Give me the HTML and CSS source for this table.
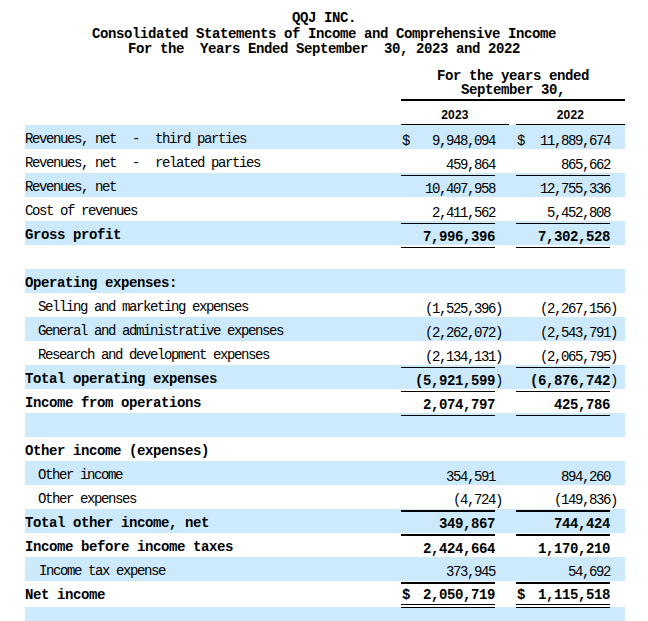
FILE: index.html
```html
<!DOCTYPE html>
<html lang="en">
<head>
<meta charset="utf-8">
<title>QQJ INC. Consolidated Statements of Income</title>
<link rel="stylesheet" href="styles.css">
</head>
<body>
<div class="page">
  <header class="title">
    <div class="tline">QQJ INC.</div>
    <div class="tline">Consolidated Statements of Income and Comprehensive Income</div>
    <div class="tline">For the  Years Ended September  30, 2023 and 2022</div>
  </header>

  <section class="statement">
    <div class="grid head">
      <div class="period">For the years ended<br>September 30,</div>
    </div>
    <div class="grid years">
      <div class="yr y1">2023</div>
      <div class="yr y2">2022</div>
    </div>

    <div class="rows">
      <div class="grid row">
        <div class="lbl">Revenues, net<span class="dash">-</span>third parties</div>
        <div class="num"><span class="cur">$</span>9,948,094</div><div class="par"></div><div></div>
        <div class="num"><span class="cur">$</span>11,889,674</div><div class="par"></div>
      </div>
      <div class="grid row">
        <div class="lbl">Revenues, net<span class="dash">-</span>related parties</div>
        <div class="num u1">459,864</div><div class="par"></div><div></div>
        <div class="num u1">865,662</div><div class="par"></div>
      </div>
      <div class="grid row">
        <div class="lbl">Revenues, net</div>
        <div class="num">10,407,958</div><div class="par"></div><div></div>
        <div class="num">12,755,336</div><div class="par"></div>
      </div>
      <div class="grid row">
        <div class="lbl">Cost of revenues</div>
        <div class="num u1">2,411,562</div><div class="par"></div><div></div>
        <div class="num u1">5,452,808</div><div class="par"></div>
      </div>
      <div class="grid row">
        <div class="lbl b">Gross profit</div>
        <div class="num u1 b">7,996,396</div><div class="par"></div><div></div>
        <div class="num u1 b">7,302,528</div><div class="par"></div>
      </div>
      <div class="grid row"></div>
      <div class="grid row">
        <div class="lbl b">Operating expenses:</div>
      </div>
      <div class="grid row">
        <div class="lbl ind">Selling and marketing expenses</div>
        <div class="num">(1,525,396</div><div class="par">)</div><div></div>
        <div class="num">(2,267,156</div><div class="par">)</div>
      </div>
      <div class="grid row">
        <div class="lbl ind">General and administrative expenses</div>
        <div class="num">(2,262,072</div><div class="par">)</div><div></div>
        <div class="num">(2,543,791</div><div class="par">)</div>
      </div>
      <div class="grid row">
        <div class="lbl ind">Research and development expenses</div>
        <div class="num u1">(2,134,131</div><div class="par">)</div><div></div>
        <div class="num u1">(2,065,795</div><div class="par">)</div>
      </div>
      <div class="grid row">
        <div class="lbl b">Total operating expenses</div>
        <div class="num u1 b">(5,921,599</div><div class="par">)</div><div></div>
        <div class="num u1 b">(6,876,742</div><div class="par">)</div>
      </div>
      <div class="grid row">
        <div class="lbl b">Income from operations</div>
        <div class="num u1 b">2,074,797</div><div class="par"></div><div></div>
        <div class="num u1 b">425,786</div><div class="par"></div>
      </div>
      <div class="grid row"></div>
      <div class="grid row">
        <div class="lbl b">Other income (expenses)</div>
      </div>
      <div class="grid row">
        <div class="lbl ind">Other income</div>
        <div class="num">354,591</div><div class="par"></div><div></div>
        <div class="num">894,260</div><div class="par"></div>
      </div>
      <div class="grid row">
        <div class="lbl ind">Other expenses</div>
        <div class="num u2">(4,724</div><div class="par">)</div><div></div>
        <div class="num u2">(149,836</div><div class="par">)</div>
      </div>
      <div class="grid row">
        <div class="lbl b">Total other income, net</div>
        <div class="num u2 b">349,867</div><div class="par"></div><div></div>
        <div class="num u2 b">744,424</div><div class="par"></div>
      </div>
      <div class="grid row">
        <div class="lbl b">Income before income taxes</div>
        <div class="num b">2,424,664</div><div class="par"></div><div></div>
        <div class="num b">1,170,210</div><div class="par"></div>
      </div>
      <div class="grid row">
        <div class="lbl ind2">Income tax expense</div>
        <div class="num u2">373,945</div><div class="par"></div><div></div>
        <div class="num u2">54,692</div><div class="par"></div>
      </div>
      <div class="grid row net">
        <div class="lbl b">Net income</div>
        <div class="num dbl b"><span class="cur">$</span>2,050,719</div><div class="par"></div><div></div>
        <div class="num dbl b"><span class="cur">$</span>1,115,518</div><div class="par"></div>
      </div>
      <div class="grid row last"></div>
    </div>
  </section>
</div>
</body>
</html>
```

FILE: styles.css
```css
* {
  box-sizing: border-box;
  margin: 0;
  padding: 0;
}

html, body {
  background: #ffffff;
}

body {
  margin: 0;
  color: #000000;
  font-family: "Liberation Mono", "DejaVu Sans Mono", monospace;
  font-size: 14px;
  letter-spacing: -1.4px;
  overflow: hidden;
}

.page {
  width: 648px;
  height: 621px;
}

.title {
  padding-top: 11px;
  text-align: center;
  font-weight: bold;
  letter-spacing: -0.4px;
  line-height: 15.5px;
}

.tline {
  white-space: pre;
}

.statement {
  width: 600px;
  margin: 11.5px 0 0 25px;
}

.grid {
  display: grid;
  grid-template-columns: 376px 94px 14px 7px 94px 15px;
}

.period {
  grid-column: 2 / 7;
  text-align: center;
  font-weight: bold;
  letter-spacing: -0.4px;
  line-height: 14px;
  padding-bottom: 2px;
  border-bottom: 2px solid #000000;
}

.years {
  height: 24px;
}

.yr {
  display: flex;
  align-items: center;
  justify-content: center;
  padding-top: 4px;
  border-bottom: 1px solid #000000;
  font-family: "Liberation Sans", Arial, sans-serif;
  font-weight: bold;
  font-size: 12px;
  letter-spacing: 0.2px;
}

.y1 {
  grid-column: 2 / 4;
}

.y2 {
  grid-column: 5 / 7;
}

.row {
  height: 24px;
}

.rows > .row:nth-child(odd) {
  background: #cceafb;
}

.row.net {
  height: 26px;
}

.row.last {
  height: 20px;
}

.lbl {
  padding-top: 2px;
  line-height: 25px;
  white-space: pre;
}

.lbl.ind {
  padding-left: 13px;
}

.lbl.ind2 {
  padding-left: 14px;
}

.dash {
  display: inline-block;
  margin: 0 16px 0 16px;
}

.num {
  display: flex;
  align-items: center;
  justify-content: flex-end;
  padding: 5px 0 0 1px;
  white-space: pre;
}

.num .cur {
  margin-right: auto;
}

.par {
  display: flex;
  align-items: center;
  padding-top: 5px;
  font-weight: normal;
  letter-spacing: -1.4px;
}

.b {
  font-weight: bold;
  letter-spacing: -0.4px;
}

.u1 {
  border-bottom: 1px solid #000000;
}

.u2 {
  border-bottom: 2px solid #000000;
}

.dbl {
  border-bottom: 4px double #000000;
}
```
